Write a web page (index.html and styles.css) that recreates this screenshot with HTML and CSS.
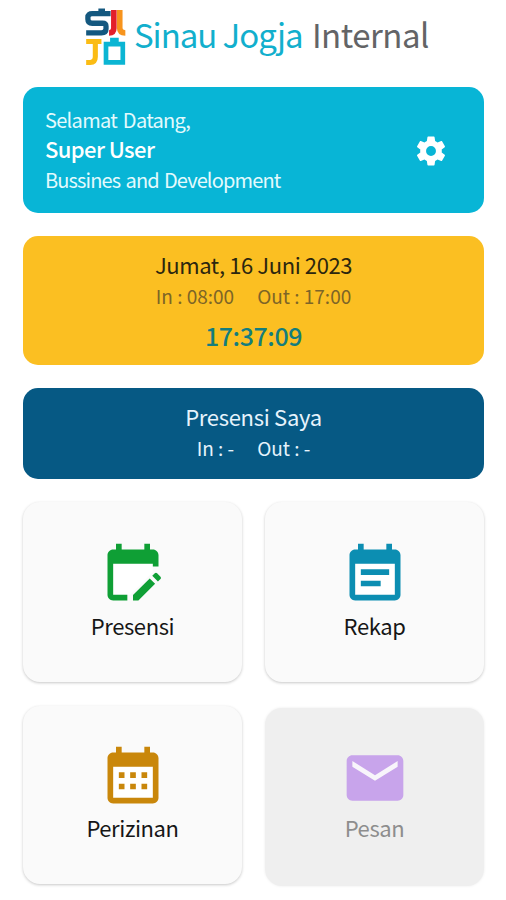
FILE: index.html
```html
<!DOCTYPE html>
<html lang="id">
<head>
  <meta charset="UTF-8">
  <meta name="viewport" content="width=device-width, initial-scale=1.0">
  <title>Sinau Jogja Internal</title>
  <link rel="stylesheet" href="styles.css">
</head>
<body>
  <div class="container">
    <header>
      <svg class="logo" viewBox="0 0 40 57" fill="none">
        <path d="M25 5.500H7Q2.700 5.500 2.700 9V11Q2.700 15 7 15H17Q20.500 15 20.500 18V20.500Q20.500 24.500 16 24.500H1" stroke="#14587f" stroke-width="5.200"/>
        <path d="M13 .5h6.500v4H13z" fill="#14587f"/>
        <path d="M28.200 2V20Q28.200 24.500 23.500 24.500" stroke="#e3202b" stroke-width="5.500"/>
        <path d="M34 2V20Q34 24.500 39.500 24.500" stroke="#f7941d" stroke-width="5.500"/>
        <path d="M1 33H16M10 33V48Q10 53.500 5 53.500H1" stroke="#fbbc14" stroke-width="5"/>
        <path d="M20.500 35.500H37V53.500H20.500zM24.500 31.500H33" stroke="#0bb5d3" stroke-width="4.600"/>
      </svg>
      <h1>Sinau Jogja <span>Internal</span></h1>
    </header>

    <section class="card profile">
      <div>
        <p class="welcome">Selamat Datang,</p>
        <p class="name">Super User</p>
        <p class="division">Bussines and Development</p>
      </div>
      <button type="button" class="settings" aria-label="Pengaturan">
        <svg viewBox="0 0 24 24" fill="currentColor">
          <path d="M19.14 12.940c.040-.300.060-.610.060-.940 0-.320-.020-.640-.070-.940l2.030-1.580c.180-.140.230-.410.120-.610l-1.920-3.320c-.120-.220-.370-.290-.590-.220l-2.390.960c-.500-.380-1.030-.700-1.620-.940l-.360-2.540c-.040-.240-.240-.410-.480-.410h-3.840c-.240 0-.430.170-.470.410l-.360 2.540c-.590.240-1.130.570-1.620.940l-2.390-.960c-.220-.080-.470 0-.590.220L2.740 8.870c-.120.210-.080.470.120.610l2.030 1.580c-.050.300-.090.630-.090.940s.020.640.070.940l-2.030 1.580c-.180.140-.230.410-.120.610l1.920 3.320c.120.220.370.290.590.220l2.390-.960c.500.380 1.030.700 1.620.940l.360 2.540c.050.240.240.410.480.410h3.840c.240 0 .440-.170.470-.410l.360-2.540c.590-.240 1.130-.560 1.620-.940l2.390.960c.220.080.470 0 .590-.220l1.920-3.320c.120-.220.070-.470-.120-.610zM12 15.300a3.300 3.300 0 1 1 0-6.600 3.300 3.300 0 0 1 0 6.600z"/>
        </svg>
      </button>
    </section>

    <section class="card today">
      <p class="date">Jumat, 16 Juni 2023</p>
      <div class="hours">
        <span class="in">In : 08:00</span>
        <span class="out">Out : 17:00</span>
      </div>
      <p class="clock">17:37:09</p>
    </section>

    <section class="card mine">
      <p class="title">Presensi Saya</p>
      <div class="hours">
        <span>In : -</span>
        <span>Out : -</span>
      </div>
    </section>

    <nav class="menu">
      <a class="tile presensi">
        <svg viewBox="0 0 24 24" fill="currentColor">
          <path d="M5 8h14v3l-8 8H5z" fill="#fff"/>
          <path d="M10 21H5c-1.100 0-2-.900-2-2V5c0-1.100.900-2 2-2h1V1h2v2h8V1h2v2h1c1.100 0 2 .900 2 2v4h-2V8H5v11h5z"/>
          <path d="M12 21v-1.900l5.900-5.900 1.900 1.900-5.900 5.900zM18.800 12.300l.9-.9q.4-.4.8 0l1.200 1.200q.4.400 0 .8l-.9.900z"/>
        </svg>
        <span>Presensi</span>
      </a>
      <a class="tile rekap">
        <svg viewBox="0 0 24 24" fill="currentColor">
          <path d="M5 8h14v11H5z" fill="#fff"/>
          <path d="M19 3h-1V1h-2v2H8V1H6v2H5c-1.100 0-2 .900-2 2v14c0 1.100.900 2 2 2h14c1.100 0 2-.900 2-2V5c0-1.100-.900-2-2-2zm0 16H5V8h14zM7 10h10v2H7zM7 14h7v2H7z"/>
        </svg>
        <span>Rekap</span>
      </a>
      <a class="tile perizinan">
        <svg viewBox="0 0 24 24" fill="currentColor">
          <path d="M5 8h14v11H5z" fill="#fff"/>
          <path d="M19 3h-1V1h-2v2H8V1H6v2H5c-1.100 0-2 .900-2 2v14c0 1.100.900 2 2 2h14c1.100 0 2-.900 2-2V5c0-1.100-.900-2-2-2zm0 16H5V8h14zM7 10h2v2H7zM11 10h2v2h-2zM15 10h2v2h-2zM7 14h2v2H7zM11 14h2v2h-2zM15 14h2v2h-2z"/>
        </svg>
        <span>Perizinan</span>
      </a>
      <a class="tile pesan disabled">
        <svg viewBox="0 0 24 24" fill="currentColor">
          <path d="M4 6h16v3l-8 5-8-5z" fill="#f8f5fb"/>
          <path d="M20 4H4c-1.100 0-2 .900-2 2v12c0 1.100.900 2 2 2h16c1.100 0 2-.900 2-2V6c0-1.100-.900-2-2-2zm0 4-8 5-8-5V6l8 5 8-5z"/>
        </svg>
        <span>Pesan</span>
      </a>
    </nav>
  </div>
</body>
</html>
```
FILE: styles.css
```css
body {
  font-family: "Noto Sans CJK SC", "Noto Sans", sans-serif;
  background-color: #fff;
  margin: 0;
}
p, h1 {
  margin: 0;
  font-weight: normal;
}
.container {
  height: 900px;
  padding: 0 22px 0 23px;
  box-sizing: border-box;
  overflow: hidden;
}
header {
  height: 87px;
  padding: 8px 0 0 62px;
  box-sizing: border-box;
  display: flex;
  align-items: flex-start;
  gap: 8px;
}
.logo {
  width: 41px;
  height: 58px;
}
h1 {
  font-size: 33px;
  line-height: 53px;
  letter-spacing: -1.05px;
  white-space: nowrap;
  color: #12afcd;
}
h1 span {
  color: #636466;
  letter-spacing: -0.5px;
  margin-left: 3px;
}
.card {
  border-radius: 15px;
  box-sizing: border-box;
  margin-bottom: 23px;
}
.profile {
  height: 126px;
  padding: 18px 35px 0 22px;
  display: flex;
  justify-content: space-between;
  background-color: #08b5d6;
  color: #e3fafd;
  font-size: 20px;
  line-height: 30px;
}
.profile .welcome {
  letter-spacing: -0.7px;
  word-spacing: 2px;
}
.profile .name {
  color: #fff;
  font-size: 22px;
  font-weight: 500;
  line-height: 27px;
  letter-spacing: -0.6px;
  padding-bottom: 3px;
}
.profile .division {
  letter-spacing: -0.85px;
  word-spacing: 1.5px;
}
.settings {
  width: 36px;
  height: 36px;
  margin-top: 28px;
  padding: 0;
  border: none;
  background: none;
  color: #fff;
  cursor: pointer;
}
.settings svg {
  display: block;
}
.today {
  height: 129px;
  padding-top: 11px;
  background-color: #fbbf22;
  text-align: center;
}
.date {
  font-size: 22px;
  line-height: 34px;
  letter-spacing: -0.4px;
  padding-bottom: 1px;
  color: #2b260f;
}
.hours {
  display: flex;
  justify-content: center;
  gap: 23px;
  font-size: 19px;
  line-height: 28px;
}
.today .hours {
  color: #7d6527;
}
.clock {
  font-size: 25px;
  line-height: 50px;
  letter-spacing: -0.4px;
  font-weight: 500;
  color: #147d7d;
}
.mine {
  height: 91px;
  padding-top: 11px;
  background-color: #065984;
  color: #e6f3fc;
  text-align: center;
}
.mine .title {
  font-size: 22px;
  line-height: 34px;
  letter-spacing: -0.3px;
  padding-bottom: 1px;
}
.menu {
  display: grid;
  grid-template-columns: 219px 219px;
  grid-template-rows: 180px 178px;
  gap: 24px 23px;
}
.tile {
  border-radius: 17px;
  background-color: #fafafa;
  box-shadow: 0 1px 3px rgba(0, 0, 0, 0.22);
  padding-top: 39px;
  box-sizing: border-box;
  display: flex;
  flex-direction: column;
  align-items: center;
  color: #161616;
}
.tile svg {
  width: 68px;
  height: 68px;
}
.tile span {
  font-size: 22px;
  line-height: 32px;
  letter-spacing: -0.4px;
}
.presensi svg {
  color: #0f9f35;
}
.rekap svg {
  color: #0c8eb2;
}
.perizinan,
.pesan {
  padding-top: 38px;
}
.perizinan span,
.pesan span {
  line-height: 31px;
}
.perizinan svg {
  color: #c9870b;
}
.pesan svg {
  color: #c8a4eb;
}
.disabled {
  margin: 2px 0 -2px;
  padding-top: 36px;
  background-color: #efefef;
  box-shadow: 0 0 3px rgba(0, 0, 0, 0.08);
  color: #8d8d8d;
}
```
